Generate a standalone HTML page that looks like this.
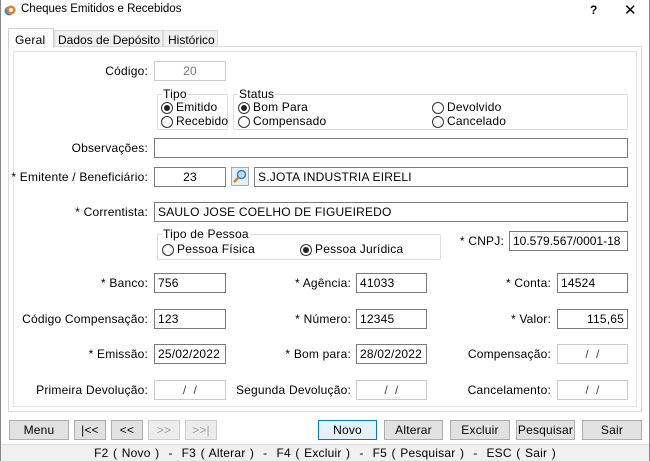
<!DOCTYPE html><html><head><meta charset="utf-8"><style>
*{box-sizing:border-box}
body{margin:0;width:650px;height:461px;background:#fff;font-family:"Liberation Sans","DejaVu Sans",sans-serif;font-size:12px;letter-spacing:0.2px;color:#000;position:relative;overflow:hidden}
.a{position:absolute;white-space:nowrap}
.l{position:absolute;text-align:right;white-space:nowrap;line-height:21px}
.i{position:absolute;height:20px;border:1px solid #7a7a7a;background:#fff;line-height:19px;padding:0 3px;white-space:nowrap}
.d{border-color:#ccc}
.g{position:absolute;border:1px solid #dcdcdc;border-radius:2px}
.gt{position:absolute;top:-8px;left:4px;background:#fff;padding:0 1px;line-height:14px}
.r{position:absolute;line-height:15px;white-space:nowrap;padding-left:15px}
.r:before{content:"";position:absolute;left:0;top:2px;width:10px;height:10px;border:1px solid #333;border-radius:50%;background:#fff}
.r.on:after{content:"";position:absolute;left:3px;top:5px;width:6px;height:6px;border-radius:50%;background:#222}
.b{position:absolute;top:420px;height:20px;border:1px solid #adadad;background:#e1e1e1;text-align:center;line-height:19px}
.dis{color:#a0a0a0;border-color:#ccc;background:#ececec}
</style></head><body>
<div class="a" style="left:0;top:0;width:650px;height:461px;border:1px solid #888;border-top:none"></div>
<div class="a" style="left:4px;top:4px;width:12px;height:12px"><svg width="12" height="12"><circle cx="5" cy="7" r="4.5" fill="#2a8fd6"/><circle cx="7" cy="6" r="4.5" fill="#f07b1e"/><circle cx="7" cy="6" r="2" fill="#fff"/></svg></div>
<div class="a" style="left:21px;top:3px;font-size:11.5px;letter-spacing:0">Cheques Emitidos e Recebidos</div>
<div class="a" style="left:590px;top:3px;font-weight:bold">?</div>
<div class="a" style="left:624px;top:1px;font-size:15px">✕</div>
<div class="a" style="left:8px;top:28px;width:46px;height:20px;border:1px solid #d0d0d0;border-bottom:none;background:#fff;z-index:2;padding:4px 6px">Geral</div>
<div class="a" style="left:54px;top:30px;width:109px;height:17px;border:1px solid #d9d9d9;background:#f0f0f0;padding:2px 3px;letter-spacing:0">Dados de Depósito</div>
<div class="a" style="left:163px;top:30px;width:55px;height:17px;border:1px solid #d9d9d9;background:#f0f0f0;padding:2px 4px;letter-spacing:0">Histórico</div>
<div class="a" style="left:8px;top:46px;width:634px;height:366px;border:1px solid #d9d9d9"></div>
<div class="a" style="left:13px;top:51px;width:624px;height:356px;border:1px solid #e3e3e3"></div>

<div class="l" style="right:502px;top:61px">Código:</div>
<div class="i d" style="left:154px;top:61px;width:72px;text-align:center;color:#777">20</div>

<div class="g" style="left:157px;top:94px;width:71px;height:36px"><span class="gt">Tipo</span></div>
<div class="r on" style="left:161px;top:100px">Emitido</div>
<div class="r" style="left:161px;top:114px">Recebido</div>
<div class="g" style="left:233px;top:94px;width:395px;height:36px"><span class="gt">Status</span></div>
<div class="r on" style="left:238px;top:100px">Bom Para</div>
<div class="r" style="left:238px;top:114px">Compensado</div>
<div class="r" style="left:432px;top:100px">Devolvido</div>
<div class="r" style="left:432px;top:114px">Cancelado</div>

<div class="l" style="right:502px;top:138px">Observações:</div>
<div class="i" style="left:154px;top:138px;width:474px"></div>

<div class="l" style="right:502px;top:167px">* Emitente / Beneficiário:</div>
<div class="i" style="left:154px;top:167px;width:72px;text-align:center">23</div>
<div class="a" style="left:231px;top:167px;width:18px;height:19px;border:1px solid #aaa;background:#e8eef5"><svg width="16" height="17"><circle cx="9.5" cy="6.5" r="4" fill="#bfe0f7" stroke="#3a7fc0" stroke-width="1.5"/><line x1="6.5" y1="9.5" x2="2" y2="14" stroke="#c08a30" stroke-width="2.5"/></svg></div>
<div class="i" style="left:254px;top:167px;width:374px">S.JOTA INDUSTRIA EIRELI</div>

<div class="l" style="right:502px;top:202px">* Correntista:</div>
<div class="i" style="left:154px;top:202px;width:474px">SAULO JOSE COELHO DE FIGUEIREDO</div>

<div class="g" style="left:157px;top:234px;width:284px;height:26px"><span class="gt">Tipo de Pessoa</span></div>
<div class="r" style="left:162px;top:242px">Pessoa Física</div>
<div class="r on" style="left:300px;top:242px">Pessoa Jurídica</div>
<div class="l" style="right:146px;top:231px">* CNPJ:</div>
<div class="i" style="left:509px;top:231px;width:119px;letter-spacing:0">10.579.567/0001-18</div>

<div class="l" style="right:502px;top:273px">* Banco:</div>
<div class="i" style="left:154px;top:273px;width:72px">756</div>
<div class="l" style="right:299px;top:273px">* Agência:</div>
<div class="i" style="left:356px;top:273px;width:71px">41033</div>
<div class="l" style="right:99px;top:273px">* Conta:</div>
<div class="i" style="left:557px;top:273px;width:71px">14524</div>

<div class="l" style="right:502px;top:309px">Código Compensação:</div>
<div class="i" style="left:154px;top:309px;width:72px">123</div>
<div class="l" style="right:299px;top:309px">* Número:</div>
<div class="i" style="left:356px;top:309px;width:71px">12345</div>
<div class="l" style="right:99px;top:309px">* Valor:</div>
<div class="i" style="left:557px;top:309px;width:71px;text-align:right">115,65</div>

<div class="l" style="right:502px;top:344px">* Emissão:</div>
<div class="i" style="left:154px;top:344px;width:72px">25/02/2022</div>
<div class="l" style="right:299px;top:344px">* Bom para:</div>
<div class="i" style="left:356px;top:344px;width:71px">28/02/2022</div>
<div class="l" style="right:99px;top:344px">Compensação:</div>
<div class="i d" style="left:557px;top:344px;width:71px;text-align:center;color:#444">/&nbsp;&nbsp;/</div>

<div class="l" style="right:502px;top:380px">Primeira Devolução:</div>
<div class="i d" style="left:154px;top:380px;width:72px;text-align:center;color:#444">/&nbsp;&nbsp;/</div>
<div class="l" style="right:299px;top:380px">Segunda Devolução:</div>
<div class="i d" style="left:356px;top:380px;width:71px;text-align:center;color:#444">/&nbsp;&nbsp;/</div>
<div class="l" style="right:99px;top:380px">Cancelamento:</div>
<div class="i d" style="left:557px;top:380px;width:71px;text-align:center;color:#444">/&nbsp;&nbsp;/</div>

<div class="b" style="left:9px;width:60px">Menu</div>
<div class="b" style="left:74px;width:32px">|&lt;&lt;</div>
<div class="b" style="left:111px;width:32px">&lt;&lt;</div>
<div class="b dis" style="left:148px;width:32px">&gt;&gt;</div>
<div class="b dis" style="left:185px;width:32px">&gt;&gt;|</div>
<div class="b" style="left:318px;width:59px;border:1px solid #0078d7;background:#e5f1fb">Novo</div>
<div class="b" style="left:384px;width:59px">Alterar</div>
<div class="b" style="left:450px;width:60px">Excluir</div>
<div class="b" style="left:516px;width:59px">Pesquisar</div>
<div class="b" style="left:582px;width:60px">Sair</div>

<div class="a" style="left:1px;top:444px;width:648px;height:17px;background:#f0f0f0;border-top:1px solid #ddd;text-align:center;line-height:16px;font-size:12px;letter-spacing:0.2px;word-spacing:1px">F2 ( Novo )&nbsp; - &nbsp;F3 ( Alterar )&nbsp; - &nbsp;F4 ( Excluir )&nbsp; - &nbsp;F5 ( Pesquisar )&nbsp; - &nbsp;ESC ( Sair )</div>
</body></html>
